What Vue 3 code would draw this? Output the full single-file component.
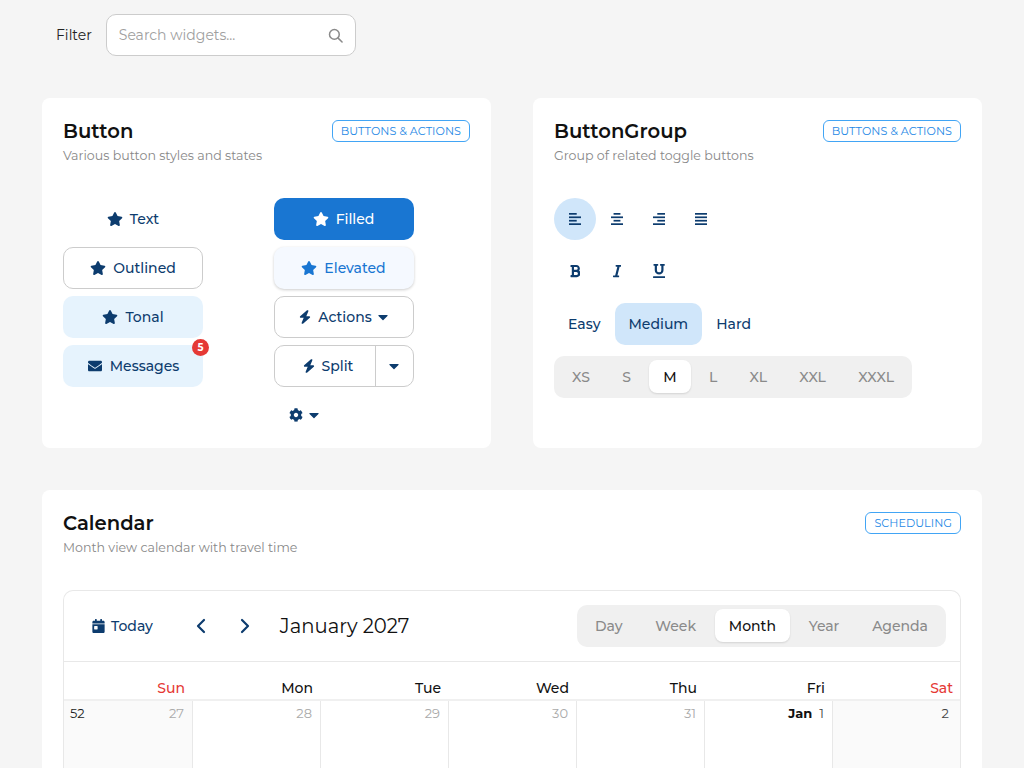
<script setup>
const star = { box: "0 0 576 512", d: "M259.3 17.8L194 150.2 47.9 171.5c-26.2 3.8-36.7 36.1-17.7 54.6l105.7 103-25 145.5c-4.5 26.3 23.2 46 46.4 33.7L288 439.6l130.7 68.7c23.2 12.2 50.9-7.4 46.4-33.7l-25-145.5 105.7-103c19-18.5 8.5-50.8-17.7-54.6L382 150.2 316.7 17.8c-11.7-23.6-45.6-23.9-57.4 0z" };
const bolt = "M349.4 44.6c5.9-13.7 1.5-29.7-10.6-38.5s-28.6-8-39.9 1.8l-256 224c-10 8.8-13.6 22.9-8.9 35.3S50.7 288 64 288H175.5L98.6 467.4c-5.9 13.7-1.5 29.7 10.6 38.5s28.6 8 39.9-1.8l256-224c10-8.8 13.6-22.9 8.9-35.3s-16.6-20.7-30-20.7H272.5L349.4 44.6z";
const caret = "M31.3 192h257.3c17.8 0 26.7 21.5 14.1 34.1L174.1 354.8c-7.8 7.8-20.5 7.8-28.3 0L17.2 226.1C4.6 213.5 13.5 192 31.3 192z";
const envelope = "M502.3 190.8c3.9-3.1 9.7-.2 9.7 4.7V400c0 26.5-21.5 48-48 48H48c-26.5 0-48-21.5-48-48V195.6c0-5 5.7-7.8 9.7-4.7 22.4 17.4 52.1 39.5 154.1 113.6 21.1 15.4 56.7 47.8 92.2 47.6 35.7.3 72-32.8 92.3-47.6 102-74.1 131.6-96.3 154-113.7zM256 320c23.2.4 56.6-29.2 73.4-41.4 132.7-96.3 142.8-104.7 173.4-128.7 5.8-4.5 9.2-11.5 9.2-18.9v-19c0-26.5-21.5-48-48-48H48C21.5 64 0 85.5 0 112v19c0 7.4 3.4 14.3 9.2 18.9 30.6 23.9 40.7 32.4 173.4 128.7 16.8 12.2 50.2 41.8 73.4 41.4z";
const gear = "M487.4 315.7l-42.6-24.6c4.3-23.2 4.3-47 0-70.2l42.6-24.6c4.9-2.8 7.1-8.6 5.5-14-11.1-35.6-30-67.8-54.7-94.6-3.8-4.1-10-5.1-14.8-2.3L380.8 110c-17.9-15.4-38.5-27.3-60.8-35.1V25.8c0-5.6-3.9-10.5-9.4-11.7-36.7-8.2-74.3-7.8-109.2 0-5.5 1.2-9.4 6.1-9.4 11.7V75c-22.2 7.9-42.8 19.8-60.8 35.1L88.7 85.5c-4.9-2.8-11-1.9-14.8 2.3-24.7 26.7-43.6 58.9-54.7 94.6-1.7 5.4.6 11.2 5.5 14L67.3 221c-4.3 23.2-4.3 47 0 70.2l-42.6 24.6c-4.9 2.8-7.1 8.6-5.5 14 11.1 35.6 30 67.8 54.7 94.6 3.8 4.1 10 5.1 14.8 2.3l42.6-24.6c17.9 15.4 38.5 27.3 60.8 35.1v49.2c0 5.6 3.9 10.5 9.4 11.7 36.7 8.2 74.3 7.8 109.2 0 5.5-1.2 9.4-6.1 9.4-11.7v-49.2c22.2-7.9 42.8-19.8 60.8-35.1l42.6 24.6c4.9 2.8 11 1.9 14.8-2.3 24.7-26.7 43.6-58.9 54.7-94.6 1.5-5.5-.7-11.3-5.6-14.1zM256 336c-44.1 0-80-35.9-80-80s35.9-80 80-80 80 35.9 80 80-35.9 80-80 80z";
const calendar = "M0 464c0 26.5 21.5 48 48 48h352c26.5 0 48-21.5 48-48V192H0v272zm64-192c0-8.8 7.2-16 16-16h96c8.8 0 16 7.2 16 16v96c0 8.8-7.2 16-16 16H80c-8.8 0-16-7.2-16-16v-96zM400 64h-48V16c0-8.8-7.2-16-16-16h-32c-8.8 0-16 7.2-16 16v48H160V16c0-8.8-7.2-16-16-16h-32c-8.8 0-16 7.2-16 16v48H48C21.5 64 0 85.5 0 112v48h448v-48c0-26.5-21.5-48-48-48z";

const alignIcons = [
  [[0, 0, 9], [0, 4, 14], [0, 8, 9], [0, 12, 14]],
  [[3, 0, 8], [0, 4, 14], [3, 8, 8], [0, 12, 14]],
  [[5, 0, 9], [0, 4, 14], [5, 8, 9], [0, 12, 14]],
  [[0, 0, 14], [0, 4, 14], [0, 8, 14], [0, 12, 14]],
];

const formatIcons = [
  { box: "0 0 384 512", d: "M333.49 238a122 122 0 0 0 27-65.21C367.87 96.49 308 32 233.42 32H34a16 16 0 0 0-16 16v48a16 16 0 0 0 16 16h31.87v288H34a16 16 0 0 0-16 16v48a16 16 0 0 0 16 16h209.32c70.8 0 134.14-51.75 141-122.4 4.74-48.45-16.39-91.85-50.83-118.6zM145.66 112h87.76a48 48 0 0 1 0 96h-87.76zm87.76 288h-87.76V288h87.76a56 56 0 0 1 0 112z" },
  { box: "0 0 320 512", d: "M320 48v32a16 16 0 0 1-16 16h-62.76l-80 320H208a16 16 0 0 1 16 16v32a16 16 0 0 1-16 16H16a16 16 0 0 1-16-16v-32a16 16 0 0 1 16-16h62.76l80-320H112a16 16 0 0 1-16-16V48a16 16 0 0 1 16-16h192a16 16 0 0 1 16 16z" },
  { box: "0 0 448 512", d: "M32 64h32v160c0 88.22 71.78 160 160 160s160-71.78 160-160V64h32a16 16 0 0 0 16-16V16a16 16 0 0 0-16-16H272a16 16 0 0 0-16 16v32a16 16 0 0 0 16 16h32v160a80 80 0 0 1-160 0V64h32a16 16 0 0 0 16-16V16a16 16 0 0 0-16-16H32a16 16 0 0 0-16 16v32a16 16 0 0 0 16 16zm400 384H16a16 16 0 0 0-16 16v32a16 16 0 0 0 16 16h416a16 16 0 0 0 16-16v-32a16 16 0 0 0-16-16z" },
];

const sizes = ["XS", "S", "M", "L", "XL", "XXL", "XXXL"];
const views = ["Day", "Week", "Month", "Year", "Agenda"];
const weekdays = ["Sun", "Mon", "Tue", "Wed", "Thu", "Fri", "Sat"];
const days = [
  { n: 27, muted: true, weekend: true, week: 52 },
  { n: 28, muted: true },
  { n: 29, muted: true },
  { n: 30, muted: true },
  { n: 31, muted: true },
  { n: 1, month: "Jan" },
  { n: 2, weekend: true },
];
</script>

<template>
  <div class="page">
    <div class="filter">
      <label class="filter-label">Filter</label>
      <div class="search">
        <input type="text" placeholder="Search widgets..." />
        <svg class="search-icon" viewBox="0 0 16 16" fill="none" stroke="#8a8a8a" stroke-width="1.6">
          <circle cx="6.8" cy="6.8" r="5.2" />
          <path d="M10.8 10.8L15 15" stroke-linecap="round" />
        </svg>
      </div>
    </div>

    <div class="two-cols">
      <section class="card">
        <header class="card-head">
          <div>
            <h2>Button</h2>
            <p>Various button styles and states</p>
          </div>
          <span class="tag">BUTTONS &amp; ACTIONS</span>
        </header>
        <div class="button-grid">
          <button class="btn plain"><svg class="ic" :viewBox="star.box"><path :d="star.d" /></svg>Text</button>
          <button class="btn filled"><svg class="ic" :viewBox="star.box"><path :d="star.d" /></svg>Filled</button>
          <button class="btn outlined"><svg class="ic" :viewBox="star.box"><path :d="star.d" /></svg>Outlined</button>
          <button class="btn elevated"><svg class="ic" :viewBox="star.box"><path :d="star.d" /></svg>Elevated</button>
          <button class="btn tonal"><svg class="ic" :viewBox="star.box"><path :d="star.d" /></svg>Tonal</button>
          <button class="btn outlined">
            <svg class="ic-bolt" viewBox="0 0 448 512"><path :d="bolt" /></svg>Actions
            <svg class="caret" viewBox="0 0 320 512"><path :d="caret" /></svg>
          </button>
          <button class="btn tonal badged">
            <svg class="ic" viewBox="0 0 512 512"><path :d="envelope" /></svg>Messages
            <span class="badge">5</span>
          </button>
          <div class="split">
            <button class="split-main"><svg class="ic-bolt" viewBox="0 0 448 512"><path :d="bolt" /></svg>Split</button>
            <button class="split-arrow"><svg class="caret" viewBox="0 0 320 512"><path :d="caret" /></svg></button>
          </div>
          <span></span>
          <button class="btn plain gear">
            <svg class="ic-gear" viewBox="0 0 512 512"><path :d="gear" /></svg>
            <svg class="caret" viewBox="0 0 320 512"><path :d="caret" /></svg>
          </button>
        </div>
      </section>

      <section class="card">
        <header class="card-head">
          <div>
            <h2>ButtonGroup</h2>
            <p>Group of related toggle buttons</p>
          </div>
          <span class="tag">BUTTONS &amp; ACTIONS</span>
        </header>
        <div class="groups">
          <div class="icon-row">
            <button v-for="(icon, i) in alignIcons" :key="i" class="icon-btn" :class="{ on: i === 0 }">
              <svg width="12" height="12" viewBox="0 0 14 14">
                <rect v-for="(b, j) in icon" :key="j" :x="b[0]" :y="b[1]" :width="b[2]" height="2" />
              </svg>
            </button>
          </div>
          <div class="icon-row second">
            <button v-for="(icon, i) in formatIcons" :key="i" class="icon-btn">
              <svg height="14" :viewBox="icon.box"><path :d="icon.d" /></svg>
            </button>
          </div>
          <div class="level-row">
            <button class="level">Easy</button>
            <button class="level on">Medium</button>
            <button class="level">Hard</button>
          </div>
          <div class="segmented sizes">
            <button v-for="s in sizes" :key="s" class="seg" :class="{ on: s === 'M' }">{{ s }}</button>
          </div>
        </div>
      </section>
    </div>

    <section class="card calendar-card">
      <header class="card-head">
        <div>
          <h2>Calendar</h2>
          <p>Month view calendar with travel time</p>
        </div>
        <span class="tag">SCHEDULING</span>
      </header>
      <div class="calendar">
        <div class="toolbar">
          <button class="today"><svg class="ic-cal" viewBox="0 0 448 512"><path :d="calendar" /></svg>Today</button>
          <button class="nav">
            <svg viewBox="0 0 10 16" fill="none" stroke="#0d3c6e" stroke-width="2.2" stroke-linecap="round" stroke-linejoin="round"><path d="M8 2L2 8l6 6" /></svg>
          </button>
          <button class="nav">
            <svg viewBox="0 0 10 16" fill="none" stroke="#0d3c6e" stroke-width="2.2" stroke-linecap="round" stroke-linejoin="round"><path d="M2 2l6 6-6 6" /></svg>
          </button>
          <h3>January 2027</h3>
          <div class="segmented views">
            <button v-for="v in views" :key="v" class="seg" :class="{ on: v === 'Month' }">{{ v }}</button>
          </div>
        </div>
        <div class="weekdays">
          <div v-for="d in weekdays" :key="d" class="weekday" :class="{ red: d === 'Sun' || d === 'Sat' }">{{ d }}</div>
        </div>
        <div class="days">
          <div v-for="d in days" :key="d.n" class="day" :class="{ weekend: d.weekend }">
            <span v-if="d.week" class="week-no">{{ d.week }}</span>
            <span class="date" :class="{ muted: d.muted }">
              <b v-if="d.month">{{ d.month }}</b>{{ d.n }}
            </span>
          </div>
        </div>
      </div>
    </section>
  </div>
</template>

<style scoped>
.page {
  padding: 14px 42px 42px;
  font-family: "Montserrat", "Inter", "Liberation Sans", sans-serif;
  color: #111;
}
button {
  font-family: inherit;
  border: none;
  background: none;
  cursor: pointer;
  padding: 0;
}
.filter {
  display: flex;
  align-items: center;
  gap: 14px;
  padding-left: 14px;
  margin-bottom: 42px;
}
.filter-label {
  font-size: 14px;
  color: #222;
}
.search {
  width: 250px;
  height: 42px;
  box-sizing: border-box;
  background: #fff;
  border: 1px solid #ccc;
  border-radius: 10px;
  display: flex;
  align-items: center;
  padding: 0 12px;
}
.search input {
  flex: 1;
  min-width: 0;
  border: none;
  outline: none;
  background: none;
  padding: 0;
  font-family: inherit;
  font-size: 14px;
  color: #222;
}
.search input::placeholder {
  color: #a0a0a0;
  opacity: 1;
}
.search-icon {
  width: 15px;
  height: 15px;
}
.two-cols {
  display: grid;
  grid-template-columns: 449px 449px;
  gap: 42px;
  margin-bottom: 42px;
}
.card {
  background: #fff;
  border-radius: 8px;
  padding: 21px;
  box-sizing: border-box;
}
.two-cols .card {
  height: 350px;
}
.card-head {
  display: flex;
  justify-content: space-between;
  align-items: flex-start;
  height: 79px;
}
.card-head h2 {
  margin: 0;
  font-size: 19.6px;
  line-height: 24px;
  font-weight: 600;
  color: #111;
}
.card-head p {
  margin: 4px 0 0;
  font-size: 12.6px;
  line-height: 18px;
  color: #888;
}
.tag {
  border: 1px solid #42a5f5;
  border-radius: 6px;
  font-size: 11.2px;
  line-height: 20px;
  height: 22px;
  box-sizing: border-box;
  padding: 0 8px;
  color: #1e88e5;
  letter-spacing: 0.04px;
  margin-top: 1px;
}
.button-grid {
  display: grid;
  grid-template-columns: 140px 140px;
  grid-auto-rows: 42px;
  column-gap: 70.5px;
  row-gap: 7px;
}
.btn {
  position: relative;
  display: flex;
  align-items: center;
  justify-content: center;
  gap: 7px;
  border-radius: 10px;
  font-size: 14px;
  font-weight: 500;
  color: #0d3c6e;
  box-sizing: border-box;
}
.ic {
  width: 16px;
  height: 14px;
  fill: currentColor;
  flex: none;
}
.ic-bolt {
  width: 12px;
  height: 14px;
  fill: currentColor;
  flex: none;
}
.ic-gear {
  width: 14px;
  height: 14px;
  fill: currentColor;
  flex: none;
}
.ic-cal {
  width: 13px;
  height: 14px;
  fill: currentColor;
  flex: none;
}
.caret {
  width: 10px;
  height: 16px;
  fill: currentColor;
  flex: none;
  margin-left: -1px;
}
.outlined {
  border: 1px solid #ccc;
  background: #fff;
}
.filled {
  background: #1976d2;
  color: #fff;
}
.elevated {
  background: #f5f9ff;
  color: #1976d2;
  box-shadow: 0 1px 3px rgba(0, 0, 0, 0.2);
}
.tonal {
  background: #e6f3fd;
}
.badge {
  position: absolute;
  top: -6px;
  right: -6px;
  width: 17px;
  height: 17px;
  border-radius: 50%;
  background: #e53935;
  color: #fff;
  font-size: 10px;
  font-weight: 700;
  line-height: 17px;
  text-align: center;
}
.gear {
  width: 60px;
  gap: 7px;
}
.split {
  display: flex;
  border: 1px solid #ccc;
  border-radius: 10px;
  box-sizing: border-box;
  overflow: hidden;
}
.split-main {
  flex: 1;
  display: flex;
  align-items: center;
  justify-content: center;
  gap: 7px;
  padding-left: 7px;
  font-size: 14px;
  font-weight: 500;
  color: #0d3c6e;
}
.split-arrow {
  width: 38px;
  border-left: 1px solid #ccc;
  color: #0d3c6e;
  display: flex;
  align-items: center;
  justify-content: center;
}
.groups {
  display: flex;
  flex-direction: column;
}
.icon-row {
  display: flex;
  margin-bottom: 10px;
}
.icon-btn {
  width: 42px;
  height: 42px;
  border-radius: 50%;
  display: flex;
  align-items: center;
  justify-content: center;
  fill: #0d3c6e;
}
.icon-btn.on {
  background: #d0e6fa;
}
.level-row {
  display: flex;
  margin-top: 1px;
  margin-bottom: 11px;
}
.level {
  height: 42px;
  padding: 0 14px;
  border-radius: 10px;
  font-size: 14px;
  font-weight: 500;
  color: #0d3c6e;
}
.level.on {
  background: #d0e6fa;
}
.segmented {
  display: flex;
  width: fit-content;
  gap: 4.3px;
  padding: 4px;
  background: #f0f0f0;
  border-radius: 10px;
  height: 42px;
  box-sizing: border-box;
}
.views {
  gap: 4.75px;
  margin-left: auto;
}
.seg {
  padding: 0 14px;
  height: 33px;
  border-radius: 8px;
  font-size: 14px;
  font-weight: 500;
  color: #8a8a8a;
}
.seg.on {
  background: #fff;
  color: #111;
  box-shadow: 0 1px 2px rgba(0, 0, 0, 0.12);
}
.calendar-card {
  padding-bottom: 0;
}
.calendar {
  border: 1px solid #e8e8e8;
  border-bottom: none;
  border-radius: 10px 10px 0 0;
}
.toolbar {
  display: flex;
  align-items: center;
  height: 71px;
  box-sizing: border-box;
  padding: 0 14px;
  border-bottom: 1px solid #e8e8e8;
}
.toolbar h3 {
  margin: 0 0 0 12px;
  font-size: 19.6px;
  font-weight: 400;
  color: #111;
}
.today {
  display: flex;
  align-items: center;
  gap: 6px;
  font-size: 14px;
  font-weight: 500;
  color: #0d3c6e;
  padding: 0 14px;
  height: 42px;
  margin-right: 13px;
}
.nav {
  width: 42px;
  height: 42px;
  margin-right: 2px;
  display: flex;
  align-items: center;
  justify-content: center;
}
.nav svg {
  width: 10px;
  height: 16px;
}
.weekdays,
.days {
  display: grid;
  grid-template-columns: repeat(7, 1fr);
}
.weekdays {
  border-bottom: 2px solid #f0f0f0;
}
.weekday {
  height: 37px;
  line-height: 52px;
  box-sizing: border-box;
  text-align: right;
  padding-right: 7px;
  font-size: 14px;
  font-weight: 500;
  color: #111;
}
.weekday.red {
  color: #e53935;
}
.day {
  display: flex;
  justify-content: space-between;
  height: 120px;
  padding: 4px 8px 3px 6px;
  box-sizing: border-box;
  border-left: 1px solid #e8e8e8;
  font-size: 13px;
}
.day:first-child {
  border-left: none;
}
.day:last-child {
  padding-right: 11px;
}
.day.weekend {
  background: #fafafa;
}
.week-no {
  color: #222;
}
.date {
  margin-left: auto;
  color: #444;
}
.date b {
  margin-right: 7px;
  color: #111;
  font-weight: 700;
}
.date.muted {
  color: #aaa;
}
</style>

<style>
html,
body {
  background: #f5f5f5;
  overflow: hidden;
}
</style>
